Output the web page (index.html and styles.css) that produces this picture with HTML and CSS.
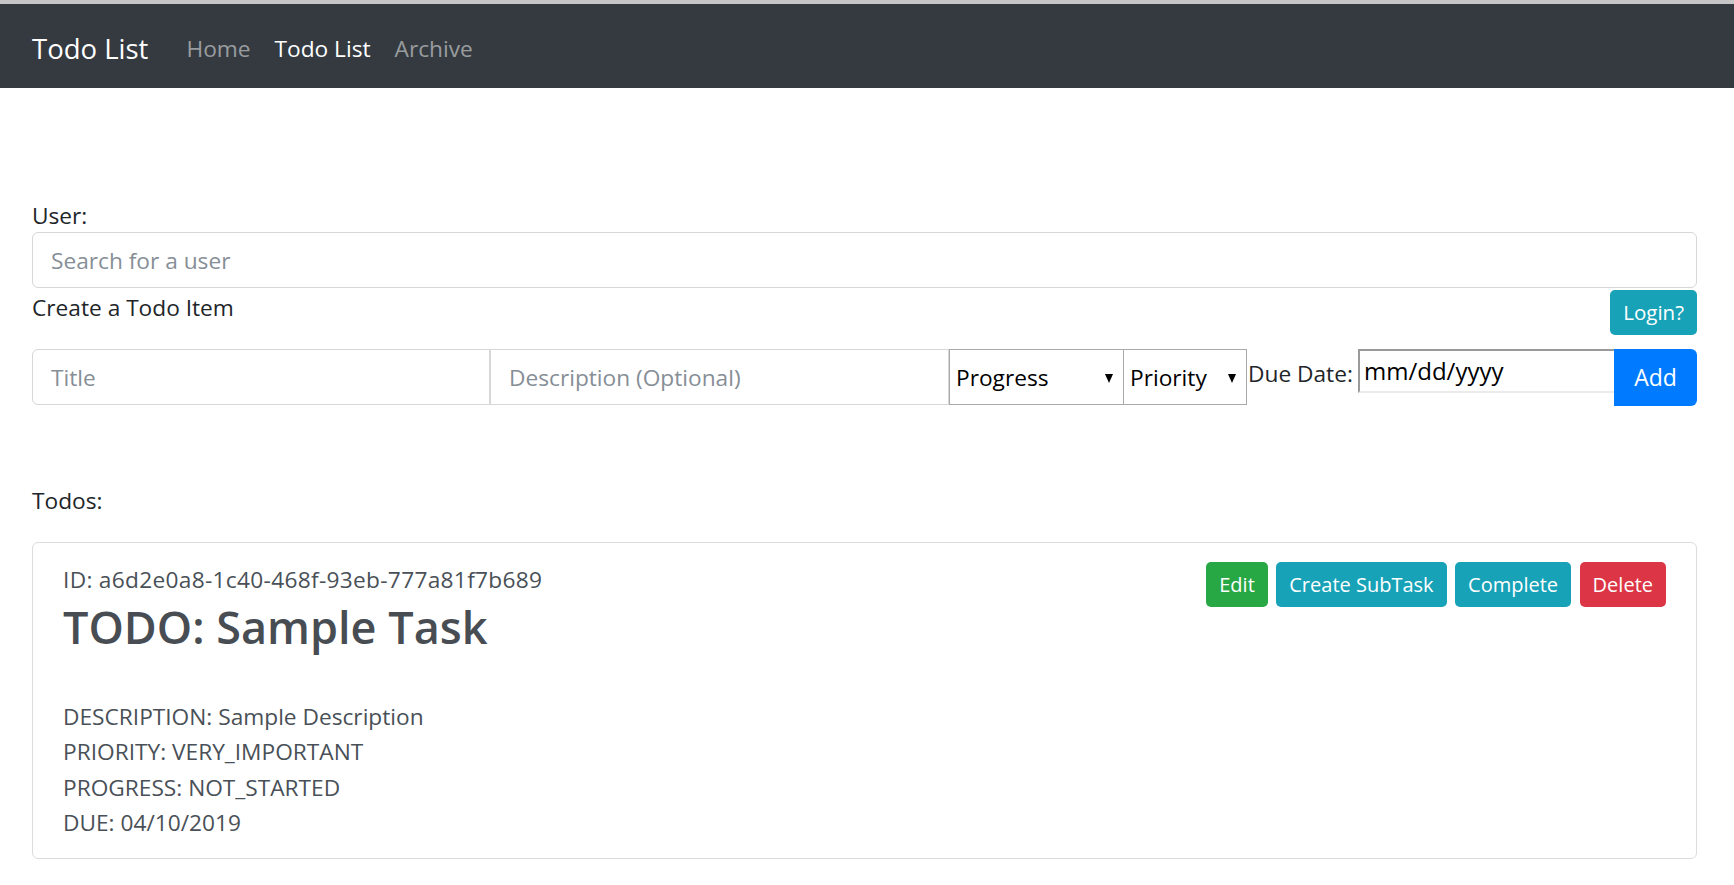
FILE: index.html
```html
<!DOCTYPE html>
<html lang="en">
<head>
<meta charset="utf-8">
<title>Todo List</title>
<link rel="stylesheet" href="styles.css">
</head>
<body>
<div class="topline"></div>
<nav class="navbar">
  <a class="brand" href="#">Todo List</a>
  <ul class="nav">
    <li><a class="nav-link" href="#">Home</a></li>
    <li><a class="nav-link active" href="#">Todo List</a></li>
    <li><a class="nav-link" href="#">Archive</a></li>
  </ul>
</nav>
<main class="container">
  <label class="user-label" for="user">User:</label>
  <input id="user" class="form-control" type="text" placeholder="Search for a user">
  <div class="create-head">
    <span class="create-title">Create a Todo Item</span>
    <button class="btn btn-sm btn-info btn-login" type="button">Login?</button>
  </div>
  <form class="todo-form">
    <input class="fc fc-title" type="text" placeholder="Title">
    <input class="fc fc-desc" type="text" placeholder="Description (Optional)">
    <div class="select-wrap sel-progress"><select class="sel"><option>Progress</option></select></div>
    <div class="select-wrap sel-priority"><select class="sel"><option>Priority</option></select></div>
    <label class="due-label" for="due">Due Date:</label>
    <input id="due" class="date-input" type="text" value="mm/dd/yyyy">
    <button class="btn btn-primary btn-add" type="button">Add</button>
  </form>
  <div class="todos-label">Todos:</div>
  <div class="card">
    <div class="card-main">
      <div class="todo-id">ID: a6d2e0a8-1c40-468f-93eb-777a81f7b689</div>
      <h2 class="todo-title">TODO: Sample Task</h2>
      <div class="details">
        <div>DESCRIPTION: Sample Description</div>
        <div>PRIORITY: VERY_IMPORTANT</div>
        <div>PROGRESS: NOT_STARTED</div>
        <div>DUE: 04/10/2019</div>
      </div>
    </div>
    <div class="card-actions">
      <button class="btn btn-sm btn-success" type="button">Edit</button>
      <button class="btn btn-sm btn-info" type="button">Create SubTask</button>
      <button class="btn btn-sm btn-info" type="button">Complete</button>
      <button class="btn btn-sm btn-danger" type="button">Delete</button>
    </div>
  </div>
</main>
</body>
</html>
```

FILE: styles.css
```css
* { box-sizing: border-box; }

body {
  margin: 0;
  font-family: "Open Sans", "Noto Sans", sans-serif;
  font-size: 22.7px;
  line-height: 35.5px;
  color: #212529;
  background: #fff;
}

.topline {
  height: 4px;
  background: #c6c6c6;
}

.navbar {
  height: 84px;
  background: #343a40;
  display: flex;
  align-items: center;
  padding: 6px 32px 0;
}

.brand {
  font-size: 27.5px;
  color: #fff;
  text-decoration: none;
  margin-right: 26px;
}

.nav {
  display: flex;
  list-style: none;
  margin: 0;
  padding: 0;
}

.nav-link {
  display: block;
  padding: 0 12px;
  color: rgba(255, 255, 255, 0.5);
  text-decoration: none;
}

.nav-link.active { color: #fff; }

.container {
  padding: 0 37px 0 32px;
}

.user-label {
  display: block;
  margin-top: 110px;
  margin-bottom: -2px;
}

.form-control {
  display: block;
  width: 100%;
  height: 56px;
  border: 1.5px solid #d7d7d7;
  border-radius: 6px;
  padding: 2px 18px 0;
  font: inherit;
  color: #495057;
  background: #fff;
}

::placeholder { color: #868e96; opacity: 1; }

.create-head {
  display: flex;
  justify-content: space-between;
  align-items: flex-start;
  margin-top: 1px;
}

.create-title { margin-top: 1px; }

.btn {
  border: none;
  color: #fff;
  font-family: inherit;
  cursor: pointer;
}

.btn-sm {
  height: 45px;
  font-size: 20px;
  padding: 0 13px;
  border-radius: 5px;
}

.btn-login { margin-top: 1px; font-size: 20.5px; }

.btn-info { background: #17a2b8; }
.btn-primary { background: #007bff; }
.btn-success { background: #28a745; }
.btn-danger { background: #dc3545; }

.todo-form {
  display: flex;
  align-items: flex-start;
  margin-top: 14px;
}

.fc {
  height: 56px;
  border: 1.5px solid #d7d7d7;
  padding: 2px 18px 0;
  font: inherit;
  color: #495057;
  background: #fff;
}

.fc-title {
  width: 458px;
  border-radius: 6px 0 0 6px;
}

.fc-desc {
  width: 459px;
  border-left-width: 1px;
}

.select-wrap {
  position: relative;
  height: 56px;
}

.sel-progress { width: 175px; }
.sel-priority { width: 124px; margin-left: -1px; }

.sel {
  appearance: none;
  -webkit-appearance: none;
  width: 100%;
  height: 100%;
  border: 1px solid #a9a9a9;
  border-radius: 0;
  background: #fff;
  font: inherit;
  color: #000;
  padding: 2px 0 0 6px;
}

.select-wrap::after {
  content: "";
  position: absolute;
  right: 11px;
  top: 25px;
  border-left: 4.5px solid transparent;
  border-right: 4.5px solid transparent;
  border-top: 9px solid #000;
  pointer-events: none;
}

.due-label {
  width: 111px;
  padding-left: 1px;
  margin-top: 7px;
  white-space: nowrap;
}

.date-input {
  flex: 1;
  min-width: 0;
  height: 44px;
  border-top: 2px solid #9a9a9a;
  border-left: 2px solid #9a9a9a;
  border-bottom: 2px solid #ebebeb;
  border-right: none;
  padding: 0 4px;
  font: inherit;
  font-size: 24px;
  color: #000;
  background: #fff;
}

.btn-add {
  width: 83px;
  height: 57px;
  font-size: 23px;
  border-radius: 0 6px 6px 0;
}

.todos-label {
  margin-top: 77px;
}

.card {
  margin-top: 24px;
  border: 1.5px solid #dcdcdc;
  border-radius: 6px;
  padding: 19px 30px 17px 30px;
  display: flex;
  justify-content: space-between;
  align-items: flex-start;
  color: #495057;
}

.todo-id {
  letter-spacing: 0.3px;
}

.todo-title {
  font-size: 45px;
  font-weight: 600;
  line-height: 57px;
  margin: 0 0 12px;
  color: #474d53;
}

.details {
  margin-top: 44px;
}

.card-actions {
  display: flex;
  gap: 8.5px;
}
```
